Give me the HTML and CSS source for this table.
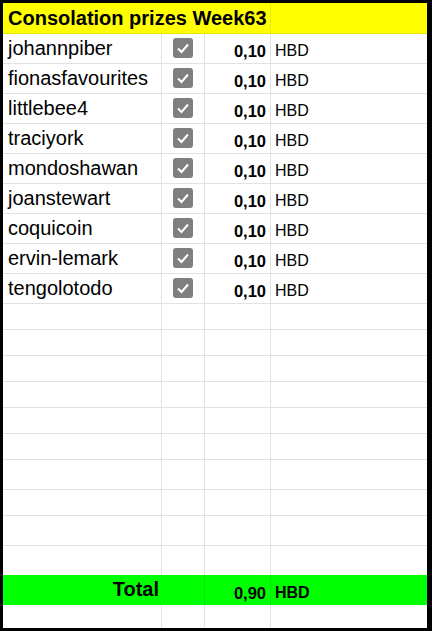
FILE: index.html
```html
<!DOCTYPE html>
<html>
<head>
<meta charset="utf-8">
<link rel="stylesheet" href="styles.css">
</head>
<body>
<div class="sheet">
  <div class="row header">
    <div class="cell title">Consolation prizes Week63</div>
    <div class="cell"></div>
  </div>

  <div class="row data"><div class="cell name">johannpiber</div><div class="cell check"><svg viewBox="0 0 20 20" width="20" height="20"><rect x="0" y="0" width="20" height="20" rx="3" fill="#7f7f7f"/><polyline points="5,10.5 8.5,14 15,6.5" fill="none" stroke="#fff" stroke-width="2"/></svg></div><div class="cell amount">0,10</div><div class="cell unit">HBD</div></div>
  <div class="row data"><div class="cell name">fionasfavourites</div><div class="cell check"><svg viewBox="0 0 20 20" width="20" height="20"><rect x="0" y="0" width="20" height="20" rx="3" fill="#7f7f7f"/><polyline points="5,10.5 8.5,14 15,6.5" fill="none" stroke="#fff" stroke-width="2"/></svg></div><div class="cell amount">0,10</div><div class="cell unit">HBD</div></div>
  <div class="row data"><div class="cell name">littlebee4</div><div class="cell check"><svg viewBox="0 0 20 20" width="20" height="20"><rect x="0" y="0" width="20" height="20" rx="3" fill="#7f7f7f"/><polyline points="5,10.5 8.5,14 15,6.5" fill="none" stroke="#fff" stroke-width="2"/></svg></div><div class="cell amount">0,10</div><div class="cell unit">HBD</div></div>
  <div class="row data"><div class="cell name">traciyork</div><div class="cell check"><svg viewBox="0 0 20 20" width="20" height="20"><rect x="0" y="0" width="20" height="20" rx="3" fill="#7f7f7f"/><polyline points="5,10.5 8.5,14 15,6.5" fill="none" stroke="#fff" stroke-width="2"/></svg></div><div class="cell amount">0,10</div><div class="cell unit">HBD</div></div>
  <div class="row data"><div class="cell name">mondoshawan</div><div class="cell check"><svg viewBox="0 0 20 20" width="20" height="20"><rect x="0" y="0" width="20" height="20" rx="3" fill="#7f7f7f"/><polyline points="5,10.5 8.5,14 15,6.5" fill="none" stroke="#fff" stroke-width="2"/></svg></div><div class="cell amount">0,10</div><div class="cell unit">HBD</div></div>
  <div class="row data"><div class="cell name">joanstewart</div><div class="cell check"><svg viewBox="0 0 20 20" width="20" height="20"><rect x="0" y="0" width="20" height="20" rx="3" fill="#7f7f7f"/><polyline points="5,10.5 8.5,14 15,6.5" fill="none" stroke="#fff" stroke-width="2"/></svg></div><div class="cell amount">0,10</div><div class="cell unit">HBD</div></div>
  <div class="row data"><div class="cell name">coquicoin</div><div class="cell check"><svg viewBox="0 0 20 20" width="20" height="20"><rect x="0" y="0" width="20" height="20" rx="3" fill="#7f7f7f"/><polyline points="5,10.5 8.5,14 15,6.5" fill="none" stroke="#fff" stroke-width="2"/></svg></div><div class="cell amount">0,10</div><div class="cell unit">HBD</div></div>
  <div class="row data"><div class="cell name">ervin-lemark</div><div class="cell check"><svg viewBox="0 0 20 20" width="20" height="20"><rect x="0" y="0" width="20" height="20" rx="3" fill="#7f7f7f"/><polyline points="5,10.5 8.5,14 15,6.5" fill="none" stroke="#fff" stroke-width="2"/></svg></div><div class="cell amount">0,10</div><div class="cell unit">HBD</div></div>
  <div class="row data"><div class="cell name">tengolotodo</div><div class="cell check"><svg viewBox="0 0 20 20" width="20" height="20"><rect x="0" y="0" width="20" height="20" rx="3" fill="#7f7f7f"/><polyline points="5,10.5 8.5,14 15,6.5" fill="none" stroke="#fff" stroke-width="2"/></svg></div><div class="cell amount">0,10</div><div class="cell unit">HBD</div></div>

  <div class="row short"><div class="cell"></div><div class="cell"></div><div class="cell"></div><div class="cell"></div></div>
  <div class="row short"><div class="cell"></div><div class="cell"></div><div class="cell"></div><div class="cell"></div></div>
  <div class="row short"><div class="cell"></div><div class="cell"></div><div class="cell"></div><div class="cell"></div></div>
  <div class="row short"><div class="cell"></div><div class="cell"></div><div class="cell"></div><div class="cell"></div></div>
  <div class="row short"><div class="cell"></div><div class="cell"></div><div class="cell"></div><div class="cell"></div></div>
  <div class="row short"><div class="cell"></div><div class="cell"></div><div class="cell"></div><div class="cell"></div></div>
  <div class="row tall"><div class="cell"></div><div class="cell"></div><div class="cell"></div><div class="cell"></div></div>
  <div class="row short"><div class="cell"></div><div class="cell"></div><div class="cell"></div><div class="cell"></div></div>
  <div class="row tall"><div class="cell"></div><div class="cell"></div><div class="cell"></div><div class="cell"></div></div>
  <div class="row pre-total"><div class="cell"></div><div class="cell"></div><div class="cell"></div><div class="cell"></div></div>

  <div class="row total">
    <div class="cell total-label">Total</div>
    <div class="cell"></div>
    <div class="cell amount">0,90</div>
    <div class="cell unit">HBD</div>
  </div>

  <div class="row last"><div class="cell"></div><div class="cell"></div><div class="cell"></div><div class="cell"></div></div>
</div>
</body>
</html>
```

FILE: styles.css
```css
* { box-sizing: border-box; }

html, body {
  margin: 0;
  padding: 0;
  background: #fff;
}

.sheet {
  width: 432px;
  height: 631px;
  border-style: solid;
  border-color: #000;
  border-width: 3px 5px 3px 3px;
  overflow: hidden;
  background: #fff;
  font-family: "Liberation Sans", Arial, sans-serif;
  color: #000;
}

.row {
  display: grid;
  grid-template-columns: 159px 43px 66px 156px;
}

.cell {
  border-right: 1px solid #e2e2e2;
  border-bottom: 1px solid #e2e2e2;
  display: flex;
  align-items: flex-end;
  white-space: nowrap;
  overflow: visible;
  min-width: 0;
}

.row > .cell:last-child { border-right: 0; }

/* header */
.header { height: 31px; background: #ffff00; }
.header .cell { border-bottom-color: #e3e300; border-right-color: #ebeb00; }
.title {
  grid-column: 1 / 4;
  font-weight: bold;
  font-size: 20px;
  line-height: 23px;
  padding: 0 0 3px 5px;
}

/* data rows */
.data { height: 30px; }
.short { height: 26px; }
.tall { height: 30px; }
.pre-total { height: 29px; }
.pre-total .cell { border-bottom: 0; }

.name {
  font-size: 20px;
  line-height: 23px;
  padding: 0 0 3px 5px;
}

.check {
  align-items: center;
  justify-content: center;
  padding-bottom: 1px;
}
.check svg { display: block; }

.amount {
  justify-content: flex-end;
  font-weight: bold;
  font-size: 16.5px;
  line-height: 18px;
  padding: 0 4px 3px 0;
}

.unit {
  font-size: 16px;
  line-height: 18px;
  padding: 0 0 3px 4px;
}

/* total */
.total { height: 30px; background: #00ff00; }
.total .cell { border-bottom: 0; border-right-color: #00ea00; }
.total .total-label {
  border-right: 0;
  justify-content: flex-end;
  font-weight: bold;
  font-size: 20px;
  line-height: 23px;
  padding: 0 3px 4px 0;
}
.total .amount { font-weight: bold; padding-bottom: 3px; }
.total .unit { font-weight: bold; }

.last { height: 30px; }
```
